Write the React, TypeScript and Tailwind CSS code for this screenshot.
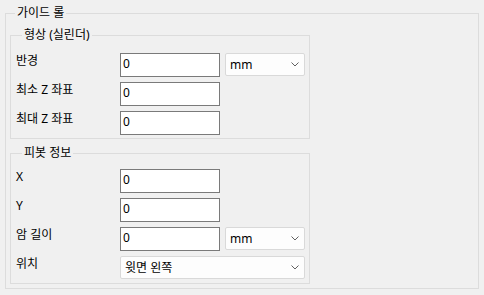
import { ReactNode } from 'react';

function TextBox({ value }: { value: string }) {
  return (
    <div className="w-[100px] h-[24px] border border-[#7a7a7a] bg-white pl-[2px] pt-[2px] leading-4 text-[12px] text-black">
      {value}
    </div>
  );
}

function Combo({ value, width }: { value: string; width: string }) {
  return (
    <div
      className={`${width} h-[23px] border border-[#d9d9d9] rounded-[2px] bg-[#fdfdfd] flex items-center justify-between pl-[4px] pr-[5px] text-[12px] leading-4 text-black`}
    >
      <span>{value}</span>
      <svg width="8" height="5" viewBox="0 0 8 5" className="shrink-0">
        <polyline points="0.5,0.5 4,4 7.5,0.5" fill="none" stroke="#606060" strokeWidth="1" />
      </svg>
    </div>
  );
}

function Row({ label, children }: { label: string; children: ReactNode }) {
  return (
    <div className="flex items-start">
      <div className="w-[104px] leading-4 text-[12px] text-black">{label}</div>
      <div className="flex items-start gap-[5px]">{children}</div>
    </div>
  );
}

function Group({ title, className, children }: { title: string; className?: string; children: ReactNode }) {
  return (
    <fieldset className={`w-[300px] border border-[#dcdcdc] pl-[5px] ${className ?? ''}`}>
      <legend className="ml-[6px] px-[2px] leading-4 text-[12px] text-black">{title}</legend>
      <div className="flex flex-col gap-[5px]">{children}</div>
    </fieldset>
  );
}

export default function App() {
  return (
    <div className="w-[484px] h-[295px] bg-[#f0f0f0] px-[5px] pt-[5px] font-['Noto_Sans','Noto_Sans_CJK_KR',sans-serif] text-[12px]">
      <fieldset className="h-[284px] border border-[#dcdcdc] px-[4px] pt-[6px] pb-[4px]">
        <legend className="ml-[5px] px-[2px] leading-4 text-[12px] text-black">가이드 롤</legend>

        <Group title="형상 (실린더)" className="pt-[10px] pb-[3px]">
          <Row label="반경">
            <TextBox value="0" />
            <Combo value="mm" width="w-[80px]" />
          </Row>
          <Row label="최소 Z 좌표">
            <TextBox value="0" />
          </Row>
          <Row label="최대 Z 좌표">
            <TextBox value="0" />
          </Row>
        </Group>

        <Group title="피봇 정보" className="mt-[6px] pt-[8px] pb-[4px]">
          <Row label="X">
            <TextBox value="0" />
          </Row>
          <Row label="Y">
            <TextBox value="0" />
          </Row>
          <Row label="암 길이">
            <TextBox value="0" />
            <Combo value="mm" width="w-[80px]" />
          </Row>
          <Row label="위치">
            <Combo value="윗면 왼쪽" width="w-[185px]" />
          </Row>
        </Group>
      </fieldset>
    </div>
  );
}
